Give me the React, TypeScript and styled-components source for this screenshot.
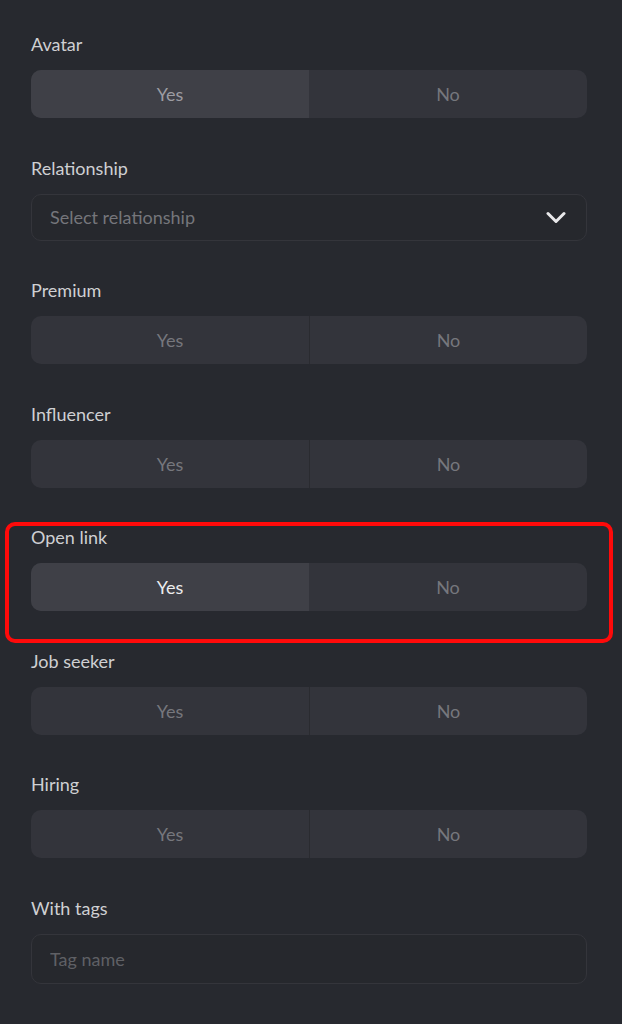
import React from 'react';
import styled, { createGlobalStyle } from 'styled-components';

const GlobalStyle = createGlobalStyle`
  html, body {
    margin: 0;
    padding: 0;
    background: #27292f;
  }
  body {
    font-family: 'Lato', 'Noto Sans', sans-serif;
  }
`;

const Page = styled.div`
  min-height: 1024px;
  box-sizing: border-box;
  padding: 32px 35px 40px 31px;
  background: #27292f;
  display: flex;
  flex-direction: column;
  gap: 37.5px;
`;

const Field = styled.div<{ $highlight?: boolean }>`
  position: relative;
  display: flex;
  flex-direction: column;
  gap: 14px;

  ${(p) =>
    p.$highlight &&
    `
    &::after {
      content: '';
      position: absolute;
      top: -3px;
      bottom: -32px;
      left: -26px;
      right: -26px;
      border: 4px solid #ff0a0a;
      border-radius: 10px;
      pointer-events: none;
    }
  `}
`;

const Label = styled.div`
  font-size: 18px;
  line-height: 24px;
  color: #cfd0d3;
`;

const Segmented = styled.div`
  display: grid;
  grid-template-columns: 1fr 1fr;
  height: 48px;
  border-radius: 10px;
  overflow: hidden;
  background: #33343b;
`;

const Segment = styled.div<{ $active?: boolean; $strong?: boolean; $divider?: boolean }>`
  display: flex;
  align-items: center;
  justify-content: center;
  font-size: 18px;
  background: ${(p) => (p.$active ? '#3f4047' : 'transparent')};
  color: ${(p) => (p.$strong ? '#ececee' : p.$active ? '#9c9ca2' : '#76777d')};
  border-left: ${(p) => (p.$divider ? '1px solid #2a2b30' : 'none')};
`;

const SelectBox = styled.div`
  height: 47px;
  box-sizing: border-box;
  border: 1px solid #34353b;
  border-radius: 10px;
  background: #26282d;
  display: flex;
  align-items: center;
  justify-content: space-between;
  padding: 0 20px 0 18px;
`;

const Placeholder = styled.span`
  font-size: 18px;
  color: #75767b;
`;

const TagInput = styled.input`
  height: 50px;
  box-sizing: border-box;
  border: 1px solid #34353b;
  border-radius: 10px;
  background: #26282d;
  padding: 0 18px;
  font-family: inherit;
  font-size: 18px;
  color: #cfd0d3;
  outline: none;

  &::placeholder {
    color: #5f6065;
  }
`;

const Chevron = () => (
  <svg width="20" height="13" viewBox="0 0 20 13" fill="none">
    <path d="M2 2.5 L10 10.5 L18 2.5" stroke="#e9e9eb" strokeWidth="3" strokeLinecap="round" strokeLinejoin="round" />
  </svg>
);

type Toggle = {
  label: string;
  value: 'yes' | 'no' | null;
  strong?: boolean;
  highlight?: boolean;
};

const YesNo = ({ value, strong }: { value: Toggle['value']; strong?: boolean }) => (
  <Segmented>
    <Segment $active={value === 'yes'} $strong={strong && value === 'yes'}>Yes</Segment>
    <Segment $active={value === 'no'} $divider={value === null} $strong={strong && value === 'no'}>
      No
    </Segment>
  </Segmented>
);

const ToggleField = ({ label, value, strong, highlight }: Toggle) => (
  <Field $highlight={highlight}>
    <Label>{label}</Label>
    <YesNo value={value} strong={strong} />
  </Field>
);

const App = () => {
  return (
    <>
      <GlobalStyle />
      <Page>
        <ToggleField label="Avatar" value="yes" />
        <Field>
          <Label>Relationship</Label>
          <SelectBox>
            <Placeholder>Select relationship</Placeholder>
            <Chevron />
          </SelectBox>
        </Field>
        <ToggleField label="Premium" value={null} />
        <ToggleField label="Influencer" value={null} />
        <ToggleField label="Open link" value="yes" strong highlight />
        <ToggleField label="Job seeker" value={null} />
        <ToggleField label="Hiring" value={null} />
        <Field>
          <Label>With tags</Label>
          <TagInput placeholder="Tag name" />
        </Field>
      </Page>
    </>
  );
};

export default App;
